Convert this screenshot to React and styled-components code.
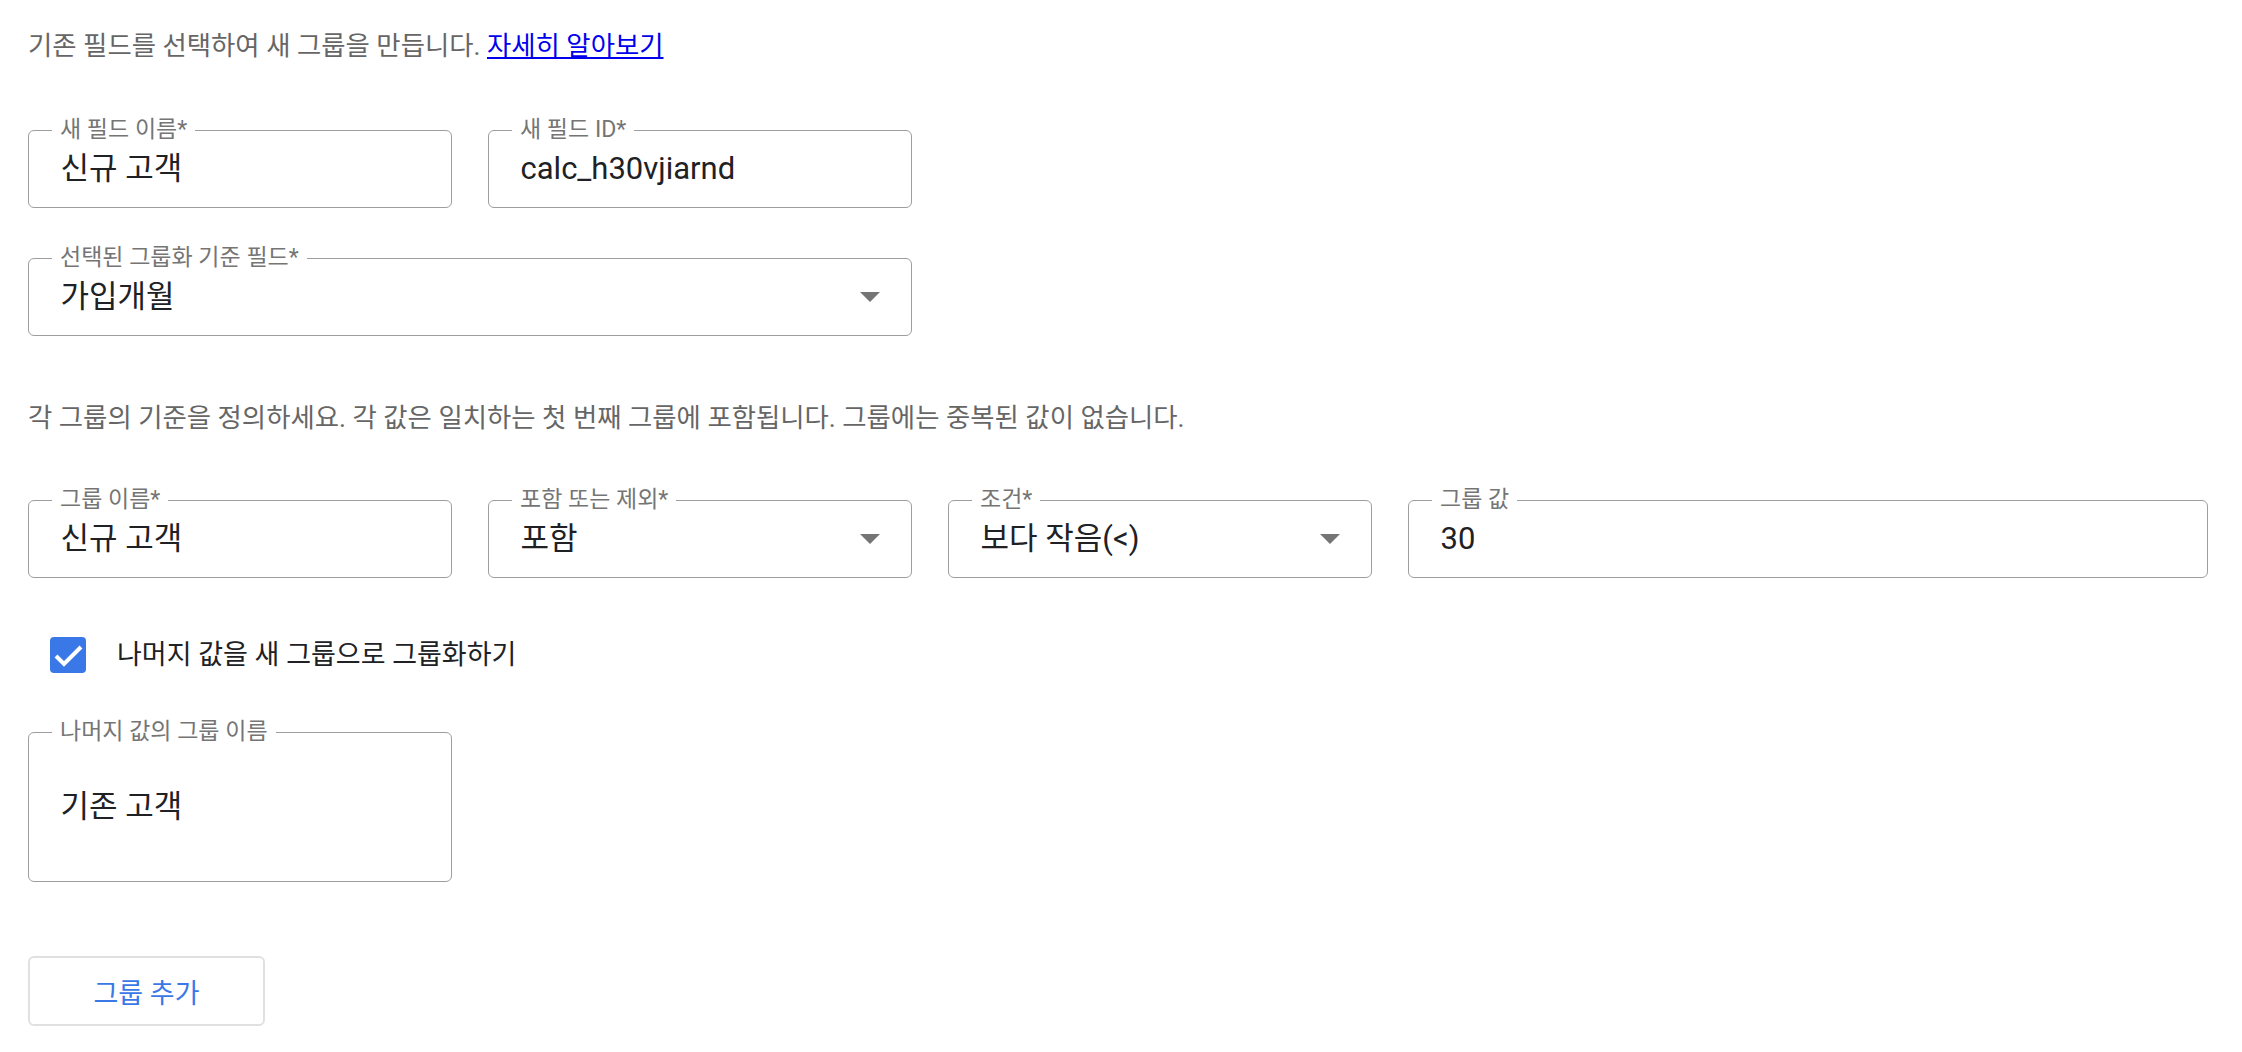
import React from "react";
import styled, { createGlobalStyle } from "styled-components";

const FONT = `Roboto, "Noto Sans CJK KR", "Noto Sans", sans-serif`;

const GlobalStyle = createGlobalStyle`
  html, body { margin: 0; padding: 0; background: #fff; }
  body { font-family: ${FONT}; -webkit-font-smoothing: antialiased; }
  * { box-sizing: border-box; }
`;

const Page = styled.main`
  padding: 30px 28px 24px;
  display: flex;
  flex-direction: column;
  align-items: flex-start;
`;

const Paragraph = styled.p`
  margin: ${(p) => p.$mt || 0}px 0 0;
  font-size: 26.4px;
  line-height: 32px;
  color: #666;
`;

const Link = styled.a`
  color: #0000ee;
  text-decoration: underline;
  cursor: pointer;
`;

const Row = styled.div`
  display: grid;
  grid-template-columns: ${(p) => p.$cols};
  column-gap: 36px;
  margin-top: ${(p) => p.$mt}px;
`;

const Field = styled.div`
  position: relative;
  height: ${(p) => p.$h || 78}px;
  border: 1.5px solid #9e9e9e;
  border-radius: 6px;
  display: flex;
  align-items: center;
  padding: 0 31px 0 31.5px;
  background: #fff;
`;

const FloatLabel = styled.span`
  position: absolute;
  top: -14px;
  left: 23px;
  padding: 0 8px;
  background: #fff;
  font-size: 23px;
  line-height: 26px;
  color: #757575;
  white-space: nowrap;
`;

const Value = styled.span`
  font-size: 31px;
  line-height: 38px;
  color: #202124;
  white-space: nowrap;
`;

const Arrow = styled.svg`
  margin-left: auto;
  width: 20px;
  height: 10px;
  flex: none;
`;

const CheckRow = styled.label`
  display: flex;
  align-items: center;
  gap: 31px;
  margin: 59px 0 0 22px;
  font-size: 27px;
  line-height: 36px;
  color: #202124;
  cursor: pointer;
`;

const CheckBox = styled.span`
  width: 36px;
  height: 36px;
  border-radius: 4px;
  background: #3b78e7;
  display: flex;
  align-items: center;
  justify-content: center;
  flex: none;
`;

const Button = styled.button`
  margin-top: 74px;
  width: 237px;
  height: 70px;
  border: 2px solid #e0e0e0;
  border-radius: 6px;
  background: #fff;
  color: #3b78e7;
  font-family: ${FONT};
  font-size: 27px;
  cursor: pointer;
`;

const DropArrow = () => (
  <Arrow viewBox="0 0 20 10" aria-hidden="true">
    <path d="M0 0 L20 0 L10 10 Z" fill="#757575" />
  </Arrow>
);

const OutlinedField = ({ label, value, select, height }) => (
  <Field $h={height}>
    <FloatLabel>{label}</FloatLabel>
    <Value>{value}</Value>
    {select && <DropArrow />}
  </Field>
);

export default function App() {
  return (
    <>
      <GlobalStyle />
      <Page>
        <Paragraph>
          기존 필드를 선택하여 새 그룹을 만듭니다. <Link>자세히 알아보기</Link>
        </Paragraph>

        <Row $cols="424px 424px" $mt={68}>
          <OutlinedField label="새 필드 이름*" value="신규 고객" />
          <OutlinedField label="새 필드 ID*" value="calc_h30vjiarnd" />
        </Row>

        <Row $cols="884px" $mt={50}>
          <OutlinedField label="선택된 그룹화 기준 필드*" value="가입개월" select />
        </Row>

        <Paragraph $mt={66}>
          각 그룹의 기준을 정의하세요. 각 값은 일치하는 첫 번째 그룹에 포함됩니다. 그룹에는 중복된 값이 없습니다.
        </Paragraph>

        <Row $cols="424px 424px 424px 800px" $mt={66}>
          <OutlinedField label="그룹 이름*" value="신규 고객" />
          <OutlinedField label="포함 또는 제외*" value="포함" select />
          <OutlinedField label="조건*" value="보다 작음(<)" select />
          <OutlinedField label="그룹 값" value="30" />
        </Row>

        <CheckRow>
          <CheckBox>
            <svg width="36" height="36" viewBox="0 0 36 36" aria-hidden="true">
              <path d="M6 19 L14 27 L31 10" fill="none" stroke="#fff" strokeWidth="4" />
            </svg>
          </CheckBox>
          나머지 값을 새 그룹으로 그룹화하기
        </CheckRow>

        <Row $cols="424px" $mt={59}>
          <OutlinedField label="나머지 값의 그룹 이름" value="기존 고객" height={150} />
        </Row>

        <Button type="button">그룹 추가</Button>
      </Page>
    </>
  );
}
